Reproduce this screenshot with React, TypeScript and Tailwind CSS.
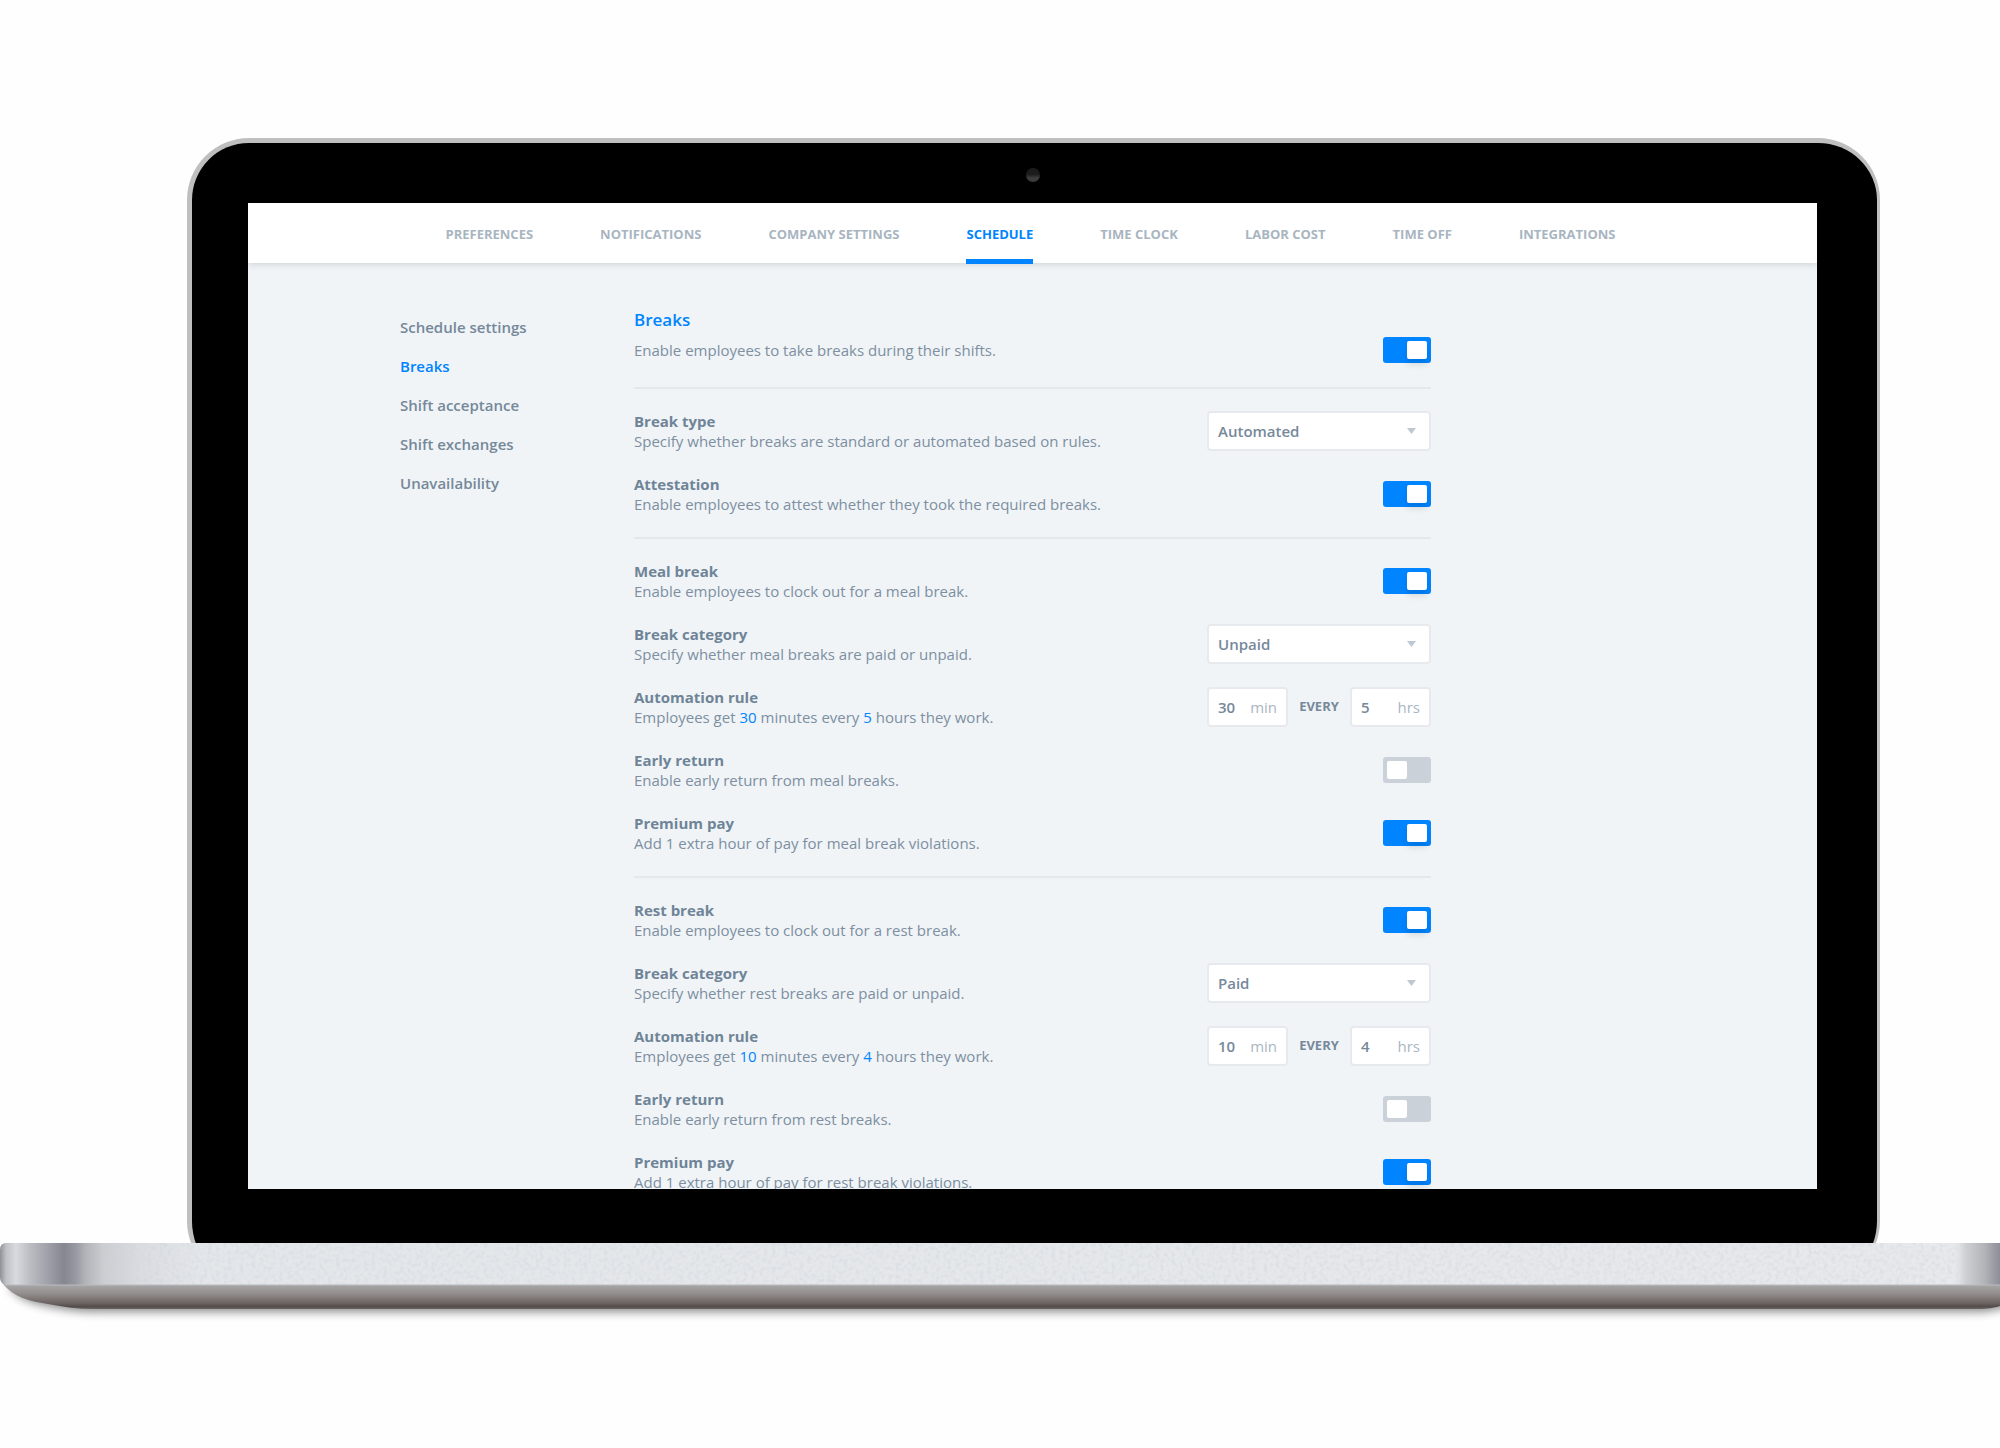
import { useId, useState } from 'react'
import type { ReactNode } from 'react'

const TABS = [
  'Preferences',
  'Notifications',
  'Company settings',
  'Schedule',
  'Time clock',
  'Labor cost',
  'Time off',
  'Integrations',
]

const SECTIONS = ['Schedule settings', 'Breaks', 'Shift acceptance', 'Shift exchanges', 'Unavailability']

// ── Controls ───────────────────────────────────────────────────────────────────

function Toggle({ id, defaultOn = false }: { id: string; defaultOn?: boolean }) {
  return (
    <input
      id={id}
      type="checkbox"
      role="switch"
      defaultChecked={defaultOn}
      className="block h-[26px] w-12 shrink-0 cursor-pointer appearance-none rounded-[3px] bg-[#cad1d9] p-1 before:block before:h-[18px] before:w-5 before:rounded-[2px] before:bg-white checked:bg-[#0084ff] checked:before:ml-5 checked:before:shadow-[0_6px_6px_rgba(0,0,0,0.1)]"
    />
  )
}

function Select({ id, value, options }: { id: string; value: string; options: string[] }) {
  return (
    <div className="relative w-56 shrink-0">
      <select
        id={id}
        defaultValue={value}
        className="block h-10 w-full appearance-none rounded-[4px] border-2 border-[#e6eaee] bg-white px-[9px] text-[15px] font-semibold text-[#76899b]"
      >
        {options.map((option) => (
          <option key={option}>{option}</option>
        ))}
      </select>
      <svg
        viewBox="0 0 9 6"
        className="pointer-events-none absolute top-[17px] right-[15px] h-[6px] w-[9px] fill-[#bdc8d2]"
        aria-hidden="true"
      >
        <path d="M0 0h9L4.5 6z" />
      </svg>
    </div>
  )
}

function NumberBox({
  value,
  unit,
  label,
  onChange,
}: {
  value: string
  unit: string
  label: string
  onChange: (value: string) => void
}) {
  return (
    <label className="flex h-10 w-[81px] items-center justify-between rounded-[4px] border-2 border-[#e6eaee] bg-white px-[9px] text-[15px]">
      <input
        type="text"
        inputMode="numeric"
        aria-label={label}
        value={value}
        onChange={(e) => onChange(e.target.value)}
        className="w-6 min-w-0 font-semibold text-[#76899b] outline-none"
      />
      <span className="text-[#a9b6c3]">{unit}</span>
    </label>
  )
}

// ── Rows ───────────────────────────────────────────────────────────────────────

function Row({
  id,
  title,
  text,
  children,
}: {
  id?: string
  title: string
  text: ReactNode
  children: ReactNode
}) {
  return (
    <div className="flex min-h-10 items-center justify-between">
      <div className="leading-5">
        <label htmlFor={id} className="block font-bold text-[#6f8497]">
          {title}
        </label>
        <p>{text}</p>
      </div>
      {children}
    </div>
  )
}

function ToggleRow({ title, text, on }: { title: string; text: string; on?: boolean }) {
  const id = useId()
  return (
    <Row id={id} title={title} text={text}>
      <Toggle id={id} defaultOn={on} />
    </Row>
  )
}

function SelectRow({
  title,
  text,
  value,
  options,
}: {
  title: string
  text: string
  value: string
  options: string[]
}) {
  const id = useId()
  return (
    <Row id={id} title={title} text={text}>
      <Select id={id} value={value} options={options} />
    </Row>
  )
}

function RuleRow({ minutes, hours }: { minutes: string; hours: string }) {
  const [min, setMin] = useState(minutes)
  const [hrs, setHrs] = useState(hours)

  return (
    <Row
      title="Automation rule"
      text={
        <>
          Employees get <span className="text-[#0084ff]">{min}</span> minutes every{' '}
          <span className="text-[#0084ff]">{hrs}</span> hours they work.
        </>
      }
    >
      <div className="flex w-56 shrink-0 items-center justify-between">
        <NumberBox value={min} unit="min" label="Break minutes" onChange={setMin} />
        <span className="text-[13px] font-bold text-[#76899b] uppercase">Every</span>
        <NumberBox value={hrs} unit="hrs" label="Hours worked" onChange={setHrs} />
      </div>
    </Row>
  )
}

function Group({ children }: { children: ReactNode }) {
  return (
    <section className="flex flex-col gap-[23px] border-t-2 border-[#e3e8ec] pt-[22px] pb-[23px]">
      {children}
    </section>
  )
}

function BreakGroup({
  kind,
  category,
  minutes,
  hours,
}: {
  kind: 'Meal' | 'Rest'
  category: string
  minutes: string
  hours: string
}) {
  const name = kind.toLowerCase()
  return (
    <Group>
      <ToggleRow title={`${kind} break`} text={`Enable employees to clock out for a ${name} break.`} on />
      <SelectRow
        title="Break category"
        text={`Specify whether ${name} breaks are paid or unpaid.`}
        value={category}
        options={['Paid', 'Unpaid']}
      />
      <RuleRow minutes={minutes} hours={hours} />
      <ToggleRow title="Early return" text={`Enable early return from ${name} breaks.`} />
      <ToggleRow title="Premium pay" text={`Add 1 extra hour of pay for ${name} break violations.`} on />
    </Group>
  )
}

// ── Settings page ──────────────────────────────────────────────────────────────

function TopNav() {
  return (
    <nav className="relative flex h-[60px] shrink-0 justify-center gap-[67px] bg-white pr-1 text-[13px] font-bold whitespace-nowrap text-[#a8b5c1] uppercase shadow-[0_2px_6px_rgba(60,70,80,0.16)]">
      {TABS.map((tab) => (
        <a
          key={tab}
          href="#"
          className={
            tab === 'Schedule'
              ? 'flex h-[61px] items-center border-b-5 border-[#0084ff] pt-[7px] text-[#0084ff]'
              : 'flex h-[61px] items-center pt-[2px]'
          }
        >
          {tab}
        </a>
      ))}
    </nav>
  )
}

function Settings() {
  return (
    <div className="flex aspect-[1569/986] flex-col overflow-hidden bg-[#f0f4f7]">
      <TopNav />
      <div className="flex pl-[152px] text-[15px] text-[#7d8fa1]">
        <aside className="w-[234px] shrink-0 pt-[54px]">
          <ul className="space-y-[19px] leading-5 font-semibold text-[#758899]">
            {SECTIONS.map((item) => (
              <li key={item}>
                <a href="#" className={item === 'Breaks' ? 'text-[#0084ff]' : ''}>
                  {item}
                </a>
              </li>
            ))}
          </ul>
        </aside>

        <main className="max-w-[797px] flex-1 pt-[45px]">
          <label htmlFor="breaks" className="block text-[17px] leading-6 font-semibold text-[#0084ff]">
            Breaks
          </label>
          <div className="mt-[5px] mb-6 flex items-center justify-between">
            <p className="leading-5">Enable employees to take breaks during their shifts.</p>
            <Toggle id="breaks" defaultOn />
          </div>

          <Group>
            <SelectRow
              title="Break type"
              text="Specify whether breaks are standard or automated based on rules."
              value="Automated"
              options={['Standard', 'Automated']}
            />
            <ToggleRow
              title="Attestation"
              text="Enable employees to attest whether they took the required breaks."
              on
            />
          </Group>
          <BreakGroup kind="Meal" category="Unpaid" minutes="30" hours="5" />
          <BreakGroup kind="Rest" category="Paid" minutes="10" hours="4" />
        </main>
      </div>
    </div>
  )
}

// ── Laptop ─────────────────────────────────────────────────────────────────────

function LaptopBase() {
  return (
    <svg viewBox="0 0 2000 100" className="relative -mt-10 block w-full" aria-hidden="true">
      <defs>
        <linearGradient id="deck" gradientUnits="userSpaceOnUse" x1="0" x2="2000" y1="0" y2="0">
          <stop offset="0" stopColor="#8f9097" />
          <stop offset="0.003" stopColor="#c0c1c6" />
          <stop offset="0.008" stopColor="#d9dadf" />
          <stop offset="0.015" stopColor="#bcbdc2" />
          <stop offset="0.024" stopColor="#9fa0a9" />
          <stop offset="0.032" stopColor="#85868f" />
          <stop offset="0.038" stopColor="#989aa2" />
          <stop offset="0.043" stopColor="#b4b5ba" />
          <stop offset="0.052" stopColor="#cccdd1" />
          <stop offset="0.07" stopColor="#dadce0" />
          <stop offset="0.1" stopColor="#e4e7ea" />
          <stop offset="0.978" stopColor="#e7e9eb" />
          <stop offset="0.983" stopColor="#cecfd2" />
          <stop offset="0.992" stopColor="#b4b5b9" />
          <stop offset="1" stopColor="#8d8e97" />
        </linearGradient>
        <linearGradient id="belly" x1="0" x2="0" y1="0" y2="1">
          <stop offset="0" stopColor="#a9a8a9" />
          <stop offset="0.35" stopColor="#969090" />
          <stop offset="0.75" stopColor="#6d6664" />
          <stop offset="0.9" stopColor="#544d4c" />
          <stop offset="1" stopColor="#6a6463" />
        </linearGradient>
        <filter id="soft" x="-5%" y="-50%" width="110%" height="220%">
          <feGaussianBlur stdDeviation="5" />
        </filter>
        <filter id="grain" x="0" y="0" width="100%" height="100%" colorInterpolationFilters="sRGB">
          <feTurbulence type="fractalNoise" baseFrequency="0.25" numOctaves="2" seed="4" />
          <feColorMatrix values="0 0 0 0 0.8  0 0 0 0 0.83  0 0 0 0 0.87  0 0 0 3 -1.2" />
          <feComposite in2="SourceGraphic" operator="in" />
        </filter>
      </defs>
      <path
        d="M8 42C18 56 30 60 50 64C65 67 80 69 95 69H1975C1988 69 1996 67 2010 63V42Z"
        fill="#000"
        opacity="0.45"
        filter="url(#soft)"
      />
      <path d="M3 41C14 54 28 58 48 61C64 64 78 66 92 66H1978C1988 66 1994 65 2000 63V41Z" fill="url(#belly)" />
      <path d="M6 0H2000V42H5Q0 40 0 34V7Q0 0 6 0Z" fill="url(#deck)" />
      <path d="M100 0H1958V42H100Z" filter="url(#grain)" opacity="0.35" />
      <path d="M6 42H2000" stroke="#b9babd" />
    </svg>
  )
}

export default function App() {
  return (
    <div className="min-h-screen overflow-hidden bg-[#fefefe] pt-[138px] font-['Open_Sans','Liberation_Sans',sans-serif]">
      <div className="mr-[6%] ml-[9.35%] rounded-[62px] border-t-5 border-r-3 border-l-5 border-[#bfbfbf] bg-black pr-[60px] pb-[94px] pl-14">
        <div className="flex h-[60px] items-center justify-center pt-1">
          <div className="size-[14px] rounded-full bg-linear-to-t from-[#3d3d3d] from-30% to-[#1c1c1c] to-55%" />
        </div>
        <Settings />
      </div>
      <LaptopBase />
    </div>
  )
}
